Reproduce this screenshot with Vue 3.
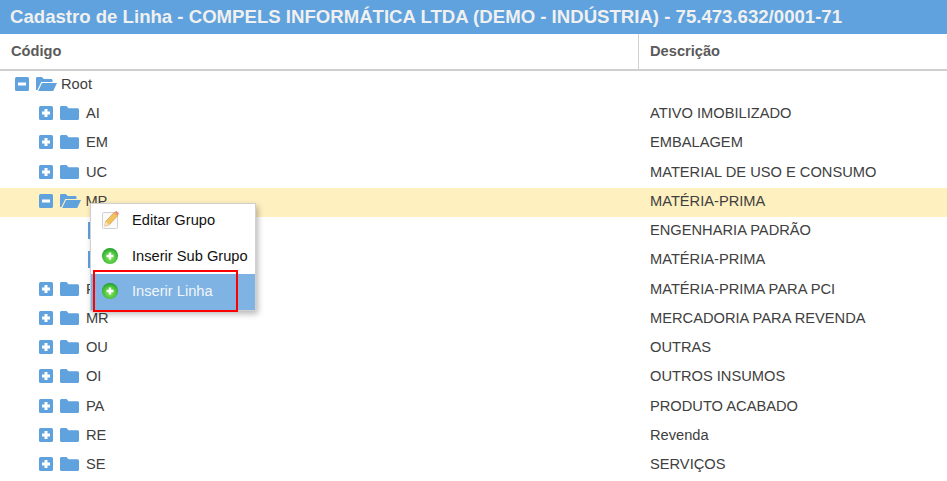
<script setup>
const rows = [
  { code: 'Root', desc: '', level: 0, state: 'open' },
  { code: 'AI', desc: 'ATIVO IMOBILIZADO', level: 1, state: 'closed' },
  { code: 'EM', desc: 'EMBALAGEM', level: 1, state: 'closed' },
  { code: 'UC', desc: 'MATERIAL DE USO E CONSUMO', level: 1, state: 'closed' },
  { code: 'MP', desc: 'MATÉRIA-PRIMA', level: 1, state: 'open', active: true },
  { code: '', desc: 'ENGENHARIA PADRÃO', level: 2, state: 'leaf' },
  { code: '', desc: 'MATÉRIA-PRIMA', level: 2, state: 'leaf' },
  { code: 'PC', desc: 'MATÉRIA-PRIMA PARA PCI', level: 1, state: 'closed' },
  { code: 'MR', desc: 'MERCADORIA PARA REVENDA', level: 1, state: 'closed' },
  { code: 'OU', desc: 'OUTRAS', level: 1, state: 'closed' },
  { code: 'OI', desc: 'OUTROS INSUMOS', level: 1, state: 'closed' },
  { code: 'PA', desc: 'PRODUTO ACABADO', level: 1, state: 'closed' },
  { code: 'RE', desc: 'Revenda', level: 1, state: 'closed' },
  { code: 'SE', desc: 'SERVIÇOS', level: 1, state: 'closed' }
]
const indent = (r) => ({ paddingLeft: 15 + r.level * 24.4 + 'px' })
</script>

<template>
  <div class="page">
    <header class="title">Cadastro de Linha - COMPELS INFORMÁTICA LTDA (DEMO - INDÚSTRIA) - 75.473.632/0001-71</header>
    <div class="head">
      <div class="hcell first">Código</div>
      <div class="hcell">Descrição</div>
    </div>
    <div class="body">
      <div v-for="(r, i) in rows" :key="i" class="row" :class="{ active: r.active }">
        <div class="code" :style="indent(r)">
          <svg v-if="r.state !== 'leaf'" class="toggle" width="14" height="14" viewBox="0 0 14 14">
            <rect width="14" height="14" rx="1.5" fill="#5fa2dd" />
            <rect x="3" y="5.5" width="8" height="3" fill="#fff" />
            <rect v-if="r.state === 'closed'" x="5.5" y="3" width="3" height="8" fill="#fff" />
          </svg>
          <svg v-if="r.state === 'open'" class="folder open" width="21" height="14" viewBox="0 0 21 14">
            <path d="M0 13V1.5C0 .7.6 0 1.4 0h4.4l2 2h7.4c.8 0 1.3.6 1.3 1.3V5H5.2L1.4 13Z M2.2 14 6 6h15l-3.8 8Z" fill="#5fa2dd" />
          </svg>
          <svg v-else-if="r.state === 'closed'" class="folder" width="19" height="14" viewBox="0 0 19 14">
            <path d="M0 1.5C0 .7.7 0 1.5 0h5l2 2.2h9c.8 0 1.5.7 1.5 1.5v8.8c0 .8-.7 1.5-1.5 1.5h-16C.7 14 0 13.3 0 12.5Z" fill="#5fa2dd" />
          </svg>
          <span v-else class="leaf"></span>
          <span v-if="r.code" class="label">{{ r.code }}</span>
        </div>
        <div class="desc">{{ r.desc }}</div>
      </div>

      <div class="menu">
        <div class="item first">
          <svg class="micon" width="18" height="18" viewBox="0 0 18 18">
            <rect x=".5" y="1.5" width="15" height="16" rx="1" fill="#fafafa" stroke="#d0d0d0" />
            <path d="M3.6 10.6 12 1.6l3.6 3.2-8.4 9-4.4 1.4Z" fill="#f2c25f" stroke="#d49a42" stroke-width=".7" />
            <path d="M12 1.6 13.6.4c.5-.4 1-.4 1.4 0l1.6 1.4c.4.4.4 1 0 1.4l-1 1.6Z" fill="#e8937a" />
            <path d="M3.6 10.6l3.6 3.2-4.4 1.4Z" fill="#f3e2bd" />
          </svg>
          <span>Editar Grupo</span>
        </div>
        <div class="item">
          <svg class="micon" width="16" height="16" viewBox="0 0 16 16">
            <defs>
              <radialGradient id="g1" cx=".5" cy=".6" r=".6">
                <stop offset="0" stop-color="#8be65f" />
                <stop offset=".7" stop-color="#45c03a" />
                <stop offset="1" stop-color="#1f9a2a" />
              </radialGradient>
            </defs>
            <circle cx="8" cy="8" r="8" fill="url(#g1)" />
            <path d="M6.8 4.5h2.4v2.3h2.3v2.4H9.2v2.3H6.8V9.2H4.5V6.8h2.3Z" fill="#fff" />
          </svg>
          <span>Inserir Sub Grupo</span>
        </div>
        <div class="item hover">
          <svg class="micon" width="16" height="16" viewBox="0 0 16 16">
            <defs>
              <radialGradient id="g2" cx=".5" cy=".6" r=".6">
                <stop offset="0" stop-color="#8be65f" />
                <stop offset=".7" stop-color="#45c03a" />
                <stop offset="1" stop-color="#1f9a2a" />
              </radialGradient>
            </defs>
            <circle cx="8" cy="8" r="8" fill="url(#g2)" />
            <path d="M6.8 4.5h2.4v2.3h2.3v2.4H9.2v2.3H6.8V9.2H4.5V6.8h2.3Z" fill="#fff" />
          </svg>
          <span>Inserir Linha</span>
        </div>
        <div class="mark"></div>
      </div>
    </div>
  </div>
</template>

<style>
html, body { margin: 0; background: #fff; }
</style>

<style scoped>
.page {
  width: 947px;
  height: 481px;
  overflow: hidden;
  font-family: "Liberation Sans", Arial, sans-serif;
  font-size: 14.67px;
  color: #404040;
  background: #fff;
}
.title {
  height: 34px;
  line-height: 33px;
  padding-left: 10px;
  background: #5fa2dd;
  color: #f0f0f0;
  font-size: 18.6px;
  font-weight: 700;
  white-space: nowrap;
}
.head {
  display: grid;
  grid-template-columns: 639px 1fr;
  height: 35px;
  border-bottom: 2px solid #cfcfcf;
}
.hcell {
  padding-left: 11px;
  line-height: 34px;
  font-size: 14.67px;
  font-weight: 700;
  color: #5a5a5a;
}
.hcell.first { border-right: 1px solid #d0d0d0; }
.body { position: relative; }
.row {
  display: grid;
  grid-template-columns: 639px 1fr;
  height: 29.25px;
  box-sizing: border-box;
  padding-bottom: 3.4px;
  align-items: center;
}
.row.active { background: #fff0c0; }
.code { display: flex; align-items: center; height: 100%; min-width: 0; }
.toggle { flex: none; }
.folder { flex: none; margin-left: 7px; }
.folder.open { margin-right: -2.5px; }
.leaf { flex: none; width: 18px; height: 17px; margin-left: 24px; background: #5fa2dd; }
.label { margin-left: 6.5px; }
.desc { padding-left: 11px; }
.menu {
  position: absolute;
  left: 90px;
  top: 132px;
  width: 164px;
  background: #fff;
  border: 1px solid #d0d0d0;
  box-shadow: 2px 3px 6px rgba(0, 0, 0, .28);
  color: #111;
  font-size: 14.67px;
}
.item {
  display: flex;
  align-items: center;
  height: 35px;
  box-sizing: border-box;
  padding: 0 0 2px 11px;
  white-space: nowrap;
}
.item.first { padding-bottom: 4px; }
.item span { position: absolute; left: 41px; }
.micon { flex: none; }
.item.hover { height: 36px; background: #7fb3e3; color: #f2f6fa; }
.mark {
  position: absolute;
  left: 2px;
  top: 66px;
  width: 141px;
  height: 38px;
  border: 2px solid #f00;
}
</style>
